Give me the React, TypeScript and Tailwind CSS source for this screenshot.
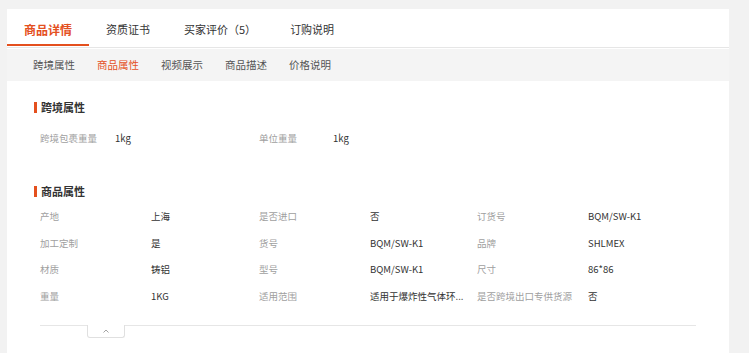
import React from 'react'

const tabs = ['商品详情', '资质证书', '买家评价（5）', '订购说明']
const subTabs = ['跨境属性', '商品属性', '视频展示', '商品描述', '价格说明']

const attrs: [string, string][] = [
  ['产地', '上海'],
  ['是否进口', '否'],
  ['订货号', 'BQM/SW-K1'],
  ['加工定制', '是'],
  ['货号', 'BQM/SW-K1'],
  ['品牌', 'SHLMEX'],
  ['材质', '铸铝'],
  ['型号', 'BQM/SW-K1'],
  ['尺寸', '86*86'],
  ['重量', '1KG'],
  ['适用范围', '适用于爆炸性气体环...'],
  ['是否跨境出口专供货源', '否'],
]

const SectionTitle = ({ title }: { title: string }) => (
  <div className="flex items-center h-[20px] pl-[27px]">
    <span className="w-[3px] h-[11px] bg-[#e4501e] mr-[4px]" />
    <span className="text-[11px] font-bold text-[#333]">{title}</span>
  </div>
)

const App = () => {
  return (
    <div
      className="min-h-[353px] bg-[#f2f2f2] pt-[9px] pl-[7px] pr-[20px]"
      style={{ fontFamily: '"Noto Sans CJK SC", "Noto Sans", sans-serif' }}
    >
      <div className="w-[722px] min-h-[344px] bg-white">
        {/* main tabs */}
        <div className="flex h-[39px] border-b border-[#e6e6e6]">
          {tabs.map((t, i) => (
            <div
              key={t}
              className={
                i === 0
                  ? 'relative flex items-center px-[17px] text-[12px] font-bold text-[#e4501e]'
                  : 'relative flex items-center px-[17px] text-[11px] text-[#333]'
              }
            >
              <span className="mt-[3px]">{t}</span>
              {i === 0 && (
                <span className="absolute left-0 right-0 bottom-[1px] h-[2px] bg-[#e4501e]" />
              )}
            </div>
          ))}
        </div>

        {/* sub tabs */}
        <div className="flex items-center h-[32px] mt-[1px] bg-[#f4f4f4] pl-[15px]">
          {subTabs.map((t, i) => (
            <span
              key={t}
              className={
                i === 1
                  ? 'px-[11px] text-[10.5px] text-[#e4501e]'
                  : 'px-[11px] text-[10.5px] text-[#555]'
              }
            >
              {t}
            </span>
          ))}
        </div>

        {/* content */}
        <div className="pt-[16px]">
          <SectionTitle title="跨境属性" />
          <div className="grid grid-cols-[75px_144px_74px_1fr] items-center h-[26px] mt-[8px] pl-[33px] text-[9.5px]">
            <span className="text-[#a0a0a0]">跨境包裹重量</span>
            <span className="text-[#333]">1kg</span>
            <span className="text-[#a0a0a0]">单位重量</span>
            <span className="text-[#333]">1kg</span>
          </div>

          <div className="mt-[30px]">
            <SectionTitle title="商品属性" />
          </div>
          <div className="grid grid-cols-[111px_108px_111px_107px_111px_1fr] auto-rows-[26.5px] items-center mt-[2px] pl-[33px] text-[9.5px]">
            {attrs.map(([k, v]) => (
              <React.Fragment key={k}>
                <span className="text-[#a0a0a0] whitespace-nowrap">{k}</span>
                <span className="text-[#333] whitespace-nowrap">{v}</span>
              </React.Fragment>
            ))}
          </div>

          <div className="mt-[16px] mx-[33px] border-t border-[#e6e6e6]">
            <div className="relative -mt-px ml-[47px] w-[38px] h-[13px] bg-white border-x border-b border-[#e0e0e0] rounded-b-[3px] flex items-center justify-center">
              <svg width="6" height="4" viewBox="0 0 6 4" fill="none">
                <path d="M0.5 3.5 L3 1 L5.5 3.5" stroke="#999" strokeWidth="0.9" />
              </svg>
            </div>
          </div>
        </div>
      </div>
    </div>
  )
}

export default App
